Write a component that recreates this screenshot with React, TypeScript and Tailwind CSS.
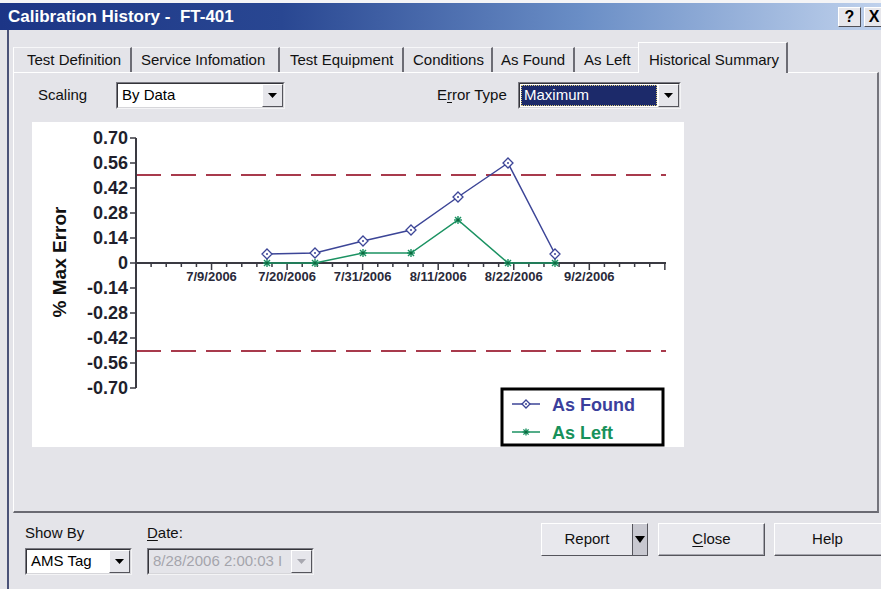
import React from "react";

// points in chart-local pixels (x, y)
const asFound: [number, number][] = [
  [235, 132], [283, 131], [331, 119], [379, 108], [426, 75], [476, 41], [523, 132],
];
const asLeft: [number, number][] = [
  [235, 141], [283, 141], [331, 131], [379, 131], [426, 98], [476, 141], [523, 141],
];
const yLabels = ["0.70", "0.56", "0.42", "0.28", "0.14", "0", "-0.14", "-0.28", "-0.42", "-0.56", "-0.70"];
const dateLabels = ["7/9/2006", "7/20/2006", "7/31/2006", "8/11/2006", "8/22/2006", "9/2/2006"];

const BLUE = "#3c4597";
const GREEN = "#1b9262";
const TICK = 15.11;

function Diamond({ x, y, r = 5 }: { x: number; y: number; r?: number }) {
  return (
    <g>
      <polygon
        points={`${x},${y - r} ${x + r},${y} ${x},${y + r} ${x - r},${y}`}
        fill="white"
        stroke={BLUE}
        strokeWidth={1.3}
      />
      <circle cx={x} cy={y} r={1} fill={BLUE} />
    </g>
  );
}

function Star({ x, y, r = 4 }: { x: number; y: number; r?: number }) {
  const d = r * 0.75;
  return (
    <g stroke={GREEN} strokeWidth={1.4}>
      <line x1={x - r} y1={y} x2={x + r} y2={y} />
      <line x1={x} y1={y - r} x2={x} y2={y + r} />
      <line x1={x - d} y1={y - d} x2={x + d} y2={y + d} />
      <line x1={x - d} y1={y + d} x2={x + d} y2={y - d} />
      <circle cx={x} cy={y} r={1.6} fill="#0e6a40" stroke="none" />
    </g>
  );
}

function HistoryChart() {
  const ticks = Array.from({ length: 36 }, (_, k) => k);
  return (
    <svg width={652} height={325} className="block">
      {/* limits */}
      <line x1={104} y1={53} x2={634} y2={53} stroke="#a83a4c" strokeWidth={2} strokeDasharray="25 10" />
      <line x1={104} y1={229} x2={634} y2={229} stroke="#a83a4c" strokeWidth={2} strokeDasharray="25 10" />

      {/* y axis */}
      <line x1={104} y1={16} x2={104} y2={266} stroke="#3a3a42" strokeWidth={2} />
      {yLabels.map((l, i) => (
        <g key={l}>
          <line x1={98} y1={16 + i * 25} x2={104} y2={16 + i * 25} stroke="#3a3a42" strokeWidth={1.5} />
          <text
            x={96}
            y={16 + i * 25}
            dy="0.36em"
            textAnchor="end"
            fontSize={18}
            fontWeight={700}
            fill="#1f1f2c"
            fontFamily="Liberation Sans, Arial, sans-serif"
          >
            {l}
          </text>
        </g>
      ))}
      <text
        x={27}
        y={140}
        dy="0.36em"
        textAnchor="middle"
        fontSize={19}
        fontWeight={700}
        fill="#111"
        fontFamily="Liberation Sans, Arial, sans-serif"
        transform="rotate(-90 27 140)"
      >
        % Max Error
      </text>

      {/* x axis */}
      <line x1={104} y1={141} x2={634} y2={141} stroke="#3a3a42" strokeWidth={2} />
      {ticks.map((k) => (
        <line
          key={k}
          x1={104 + k * TICK}
          y1={141}
          x2={104 + k * TICK}
          y2={k % 5 === 0 ? 148 : 145}
          stroke="#3a3a42"
          strokeWidth={1.5}
        />
      ))}
      {dateLabels.map((d, i) => (
        <text
          key={d}
          x={104 + (i + 1) * 5 * TICK}
          y={159}
          textAnchor="middle"
          fontSize={13}
          fontWeight={700}
          fill="#2a2a3a"
          fontFamily="Liberation Sans, Arial, sans-serif"
        >
          {d}
        </text>
      ))}

      {/* series */}
      <polyline points={asLeft.map((p) => p.join(",")).join(" ")} fill="none" stroke={GREEN} strokeWidth={1.5} />
      <polyline points={asFound.map((p) => p.join(",")).join(" ")} fill="none" stroke={BLUE} strokeWidth={1.5} />
      {asLeft.map(([x, y], i) => (
        <Star key={i} x={x} y={y} />
      ))}
      {asFound.map(([x, y], i) => (
        <Diamond key={i} x={x} y={y} />
      ))}

      {/* legend */}
      <rect x={470} y={267} width={161} height={56} fill="white" stroke="#000" strokeWidth={3} />
      <line x1={480} y1={282} x2={508} y2={282} stroke={BLUE} strokeWidth={1.5} />
      <Diamond x={494} y={282} r={4} />
      <text x={520} y={288.5} fontSize={18} fontWeight={700} fill="#3b3f9c" fontFamily="Liberation Sans, Arial, sans-serif">
        As Found
      </text>
      <line x1={480} y1={310} x2={508} y2={310} stroke={GREEN} strokeWidth={1.5} />
      <Star x={494} y={310} r={3.5} />
      <text x={520} y={316.5} fontSize={18} fontWeight={700} fill="#17915a" fontFamily="Liberation Sans, Arial, sans-serif">
        As Left
      </text>
    </svg>
  );
}

function DownArrow({ color = "#000" }: { color?: string }) {
  return (
    <svg width={9} height={5} viewBox="0 0 9 5">
      <polygon points="0,0 9,0 4.5,5" fill={color} />
    </svg>
  );
}

function Combo({
  widthClass,
  value,
  focused = false,
  disabled = false,
}: {
  widthClass: string;
  value: string;
  focused?: boolean;
  disabled?: boolean;
}) {
  return (
    <div
      className={`${widthClass} flex h-[27px] shrink-0 border border-t-[#7a7a82] border-l-[#7a7a82] border-r-[#f4f4f6] border-b-[#f4f4f6]`}
    >
      <div
        className={`flex min-w-0 flex-1 border border-t-[#34343a] border-l-[#34343a] border-r-[#d6d6da] border-b-[#d6d6da] ${
          disabled ? "bg-[#e4e4e9]" : "bg-white"
        }`}
      >
        <div className="flex min-w-0 flex-1 whitespace-nowrap">
          {focused ? (
            <div className="m-[1px] flex flex-1 items-center border border-dotted border-[#d8c878] bg-[#1c2a6a] pl-[2px] text-white">
              {value}
            </div>
          ) : (
            <div className={`flex flex-1 items-center pl-[4px] ${disabled ? "text-[#a4a4ac]" : "text-black"}`}>
              {value}
            </div>
          )}
        </div>
        <div className="flex w-[21px] shrink-0 items-center justify-center border border-t-white border-l-white border-r-[#55555c] border-b-[#55555c] bg-[#e6e6eb]">
          <DownArrow color={disabled ? "#a8a8b0" : "#000"} />
        </div>
      </div>
    </div>
  );
}

function Tab({ label, widthClass, padClass, last = false }: { label: string; widthClass: string; padClass: string; last?: boolean }) {
  return (
    <div
      className={`${widthClass} ${padClass} flex h-[25px] shrink-0 items-center border-t border-white/70 ${
        last ? "" : "border-r-2 border-r-[#6c6c74]"
      }`}
    >
      {label}
    </div>
  );
}

function PushButton({ children, widthClass }: { children: React.ReactNode; widthClass: string }) {
  return (
    <div
      className={`${widthClass} flex h-[33px] shrink-0 items-center justify-center border border-t-white border-l-white border-r-[#55555c] border-b-[#55555c] bg-[#e8e8ed] shadow-[inset_-1px_-1px_0_#a6a6ae]`}
    >
      {children}
    </div>
  );
}

export default function App() {
  return (
    <div className="flex h-[589px] w-[881px] flex-col overflow-hidden bg-[#e4e4e9] font-['Liberation_Sans',Arial,sans-serif] text-[15px] text-[#111]">
      {/* caption */}
      <div className="h-[3px] shrink-0 bg-[#f4f4f6]" />
      <div className="flex h-[27px] shrink-0 items-center bg-[linear-gradient(to_right,#1c3586_0%,#294792_32%,#6a8ec6_66%,#bfd1ec_100%)] pl-[8px]">
        <span className="whitespace-pre text-[17px] font-bold text-white">Calibration History -  FT-401</span>
        <div className="ml-auto -mr-[3px] flex gap-[3px]">
          <div className="flex h-[20px] w-[23px] items-center justify-center border border-t-white border-l-white border-r-[#505058] border-b-[#505058] bg-[#e7e7ec] text-[16px] font-bold text-black">
            ?
          </div>
          <div className="flex h-[20px] w-[20px] items-center justify-center border border-t-white border-l-white border-r-[#505058] border-b-[#505058] bg-[#e7e7ec] text-[16px] font-bold text-black">
            X
          </div>
        </div>
      </div>

      <div className="flex flex-1">
        <div className="w-[7px] shrink-0" />
        <div className="w-[2px] shrink-0 bg-[#4a5278]" />
        <div className="flex flex-1 flex-col pl-[4px]">
          {/* tabs */}
          <div className="mt-[12px] flex h-[30px] items-end">
            <Tab label="Test Definition" widthClass="w-[119px]" padClass="pl-[13px] border-l border-l-white" />
            <Tab label="Service Infomation" widthClass="w-[148px]" padClass="pl-[9px]" />
            <Tab label="Test Equipment" widthClass="w-[124px]" padClass="pl-[10px]" />
            <Tab label="Conditions" widthClass="w-[89px]" padClass="pl-[9px]" />
            <Tab label="As Found" widthClass="w-[82px]" padClass="pl-[8px]" />
            <Tab label="As Left" widthClass="w-[63px]" padClass="pl-[9px]" last />
            <div className="relative z-10 -mb-px flex h-[31px] w-[150px] shrink-0 items-start border-t border-l border-white border-r-2 border-r-[#6c6c74] bg-[#e4e4e9] pl-[10px] pt-[6px]">
              Historical Summary
            </div>
          </div>

          {/* tab page */}
          <div className="flex h-[441px] w-[866px] shrink-0 flex-col border-t border-l border-white border-r-2 border-b-2 border-r-[#74747c] border-b-[#6a6a72]">
            <div className="mt-[9px] flex h-[27px] items-center">
              <span className="w-[78px] shrink-0 pl-[24px] box-content">Scaling</span>
              <Combo widthClass="w-[169px]" value="By Data" />
              <span className="ml-[152px] w-[81px] shrink-0">
                E<span className="underline underline-offset-2">r</span>ror Type
              </span>
              <Combo widthClass="w-[163px]" value="Maximum" focused />
            </div>

            <div className="ml-[18px] mt-[13px] h-[325px] w-[652px] bg-white">
              <HistoryChart />
            </div>
          </div>

          {/* footer */}
          <div className="flex items-start pt-[11px]">
            <div className="ml-[12px] flex flex-col">
              <span className="h-[18px] leading-[18px]">Show By</span>
              <div className="mt-[6px]">
                <Combo widthClass="w-[107px]" value="AMS Tag" />
              </div>
            </div>
            <div className="ml-[15px] flex flex-col">
              <span className="h-[18px] leading-[18px]">
                <span className="underline underline-offset-2">D</span>ate:
              </span>
              <div className="mt-[6px]">
                <Combo widthClass="w-[167px]" value="8/28/2006 2:00:03 I" disabled />
              </div>
            </div>

            <div className="-mt-px ml-[227px] flex shrink-0">
              <div className="flex h-[33px] w-[107px] shrink-0 border border-t-white border-l-white border-r-[#55555c] border-b-[#55555c] bg-[#e8e8ed]">
                <div className="flex flex-1 items-center justify-center">Report</div>
                <div className="flex w-[15px] items-center justify-center border-l border-[#55555c] bg-[#c8c8d0]">
                  <svg width={10} height={7} viewBox="0 0 10 7">
                    <polygon points="0,0 10,0 5,7" fill="#000" />
                  </svg>
                </div>
              </div>
              <div className="ml-[10px]">
                <PushButton widthClass="w-[107px]">
                  <span>
                    <span className="underline underline-offset-2">C</span>lose
                  </span>
                </PushButton>
              </div>
              <div className="ml-[9px]">
                <PushButton widthClass="w-[110px]">
                  <span className="-ml-[3px]">Help</span>
                </PushButton>
              </div>
            </div>
          </div>
        </div>
      </div>
    </div>
  );
}
